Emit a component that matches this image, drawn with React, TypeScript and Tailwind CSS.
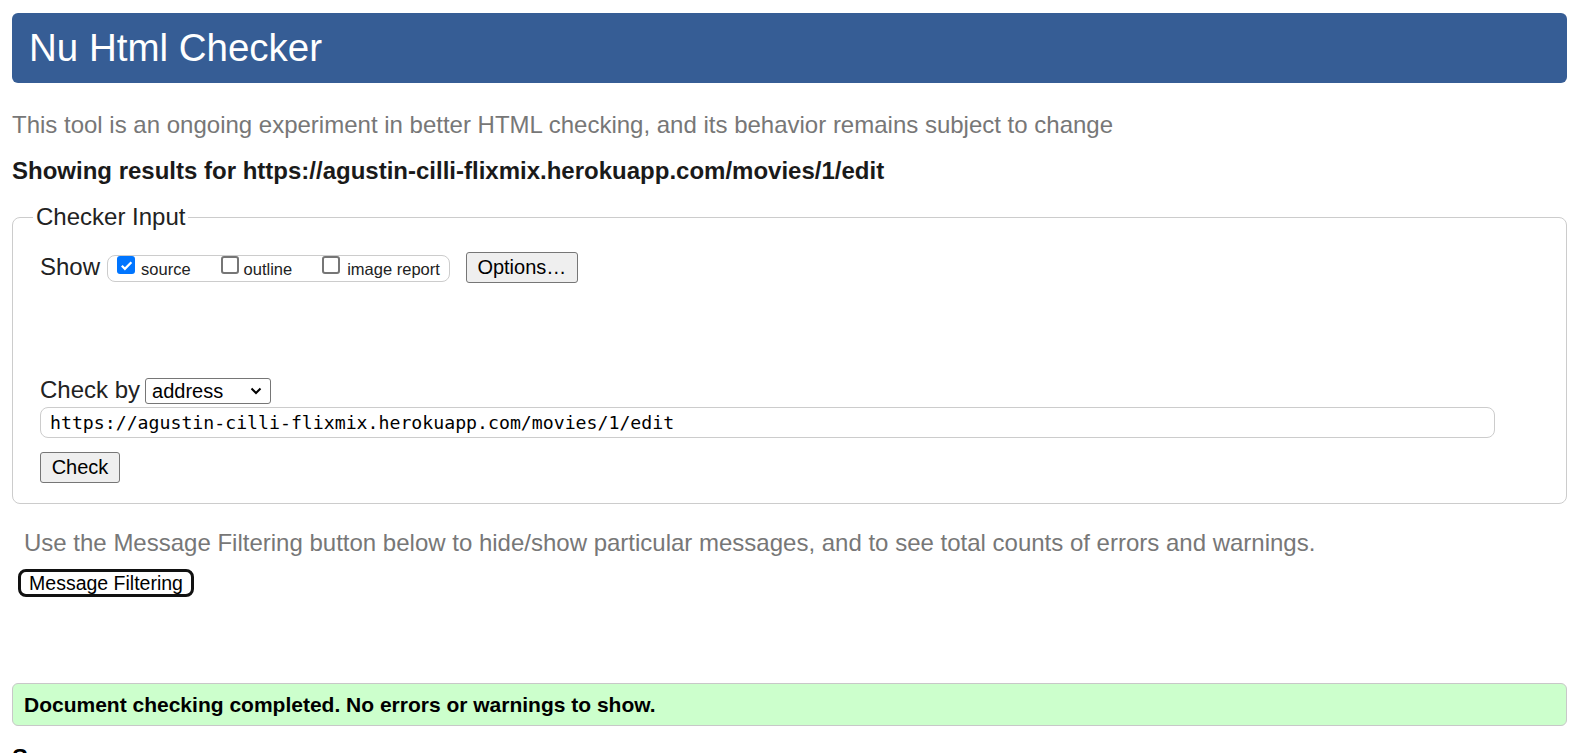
import React from "react";

function Checkbox({ checked }: { checked?: boolean }) {
  if (checked) {
    return (
      <span className="flex h-[18px] w-[18px] shrink-0 items-center justify-center rounded-[3px] bg-[#0075ff]">
        <svg viewBox="0 0 16 16" className="h-[15px] w-[15px]">
          <path d="M3 8.3l3.3 3.3L13.2 4.6" fill="none" stroke="white" strokeWidth="2.4" />
        </svg>
      </span>
    );
  }
  return <span className="h-[18px] w-[18px] shrink-0 rounded-[3px] border-2 border-[#767676] bg-white" />;
}

function ShowOption({ label, checked, gap, first }: { label: string; checked?: boolean; gap: string; first?: boolean }) {
  return (
    <div className={`flex items-start ${first ? "" : "ml-[30px]"}`}>
      <Checkbox checked={checked} />
      <span className={`${gap} mt-[3px] text-[16.5px] leading-[20px] text-[#222]`}>{label}</span>
    </div>
  );
}

const grayButton =
  "flex items-center justify-center rounded-[3px] border border-[#767676] bg-[#efefef] text-[20px] leading-[23px] text-black";

export default function App() {
  return (
    <div className="min-h-screen bg-white pl-[12px] pr-[22px] font-['Liberation_Sans',Arial,sans-serif] text-[#222]">
      <header className="mt-[13px] flex h-[70px] items-center rounded-[6px] bg-[#365d95] pl-[17px]">
        <h1 className="text-[38.5px] leading-[46px] text-white">Nu Html Checker</h1>
      </header>

      <p className="mt-[28px] text-[24px] leading-[28px] text-[#777]">
        This tool is an ongoing experiment in better HTML checking, and its behavior remains subject to change
      </p>

      <p className="mt-[18px] text-[24px] font-bold leading-[28px] text-[#1a1a1a]">
        Showing results for https://agustin-cilli-flixmix.herokuapp.com/movies/1/edit
      </p>

      <fieldset className="mt-[18px] rounded-[8px] border border-[#cccccc] pb-[20px] pl-[20px]">
        <legend className="px-[3px] text-[24px] leading-[28px]">Checker Input</legend>

        <div className="pl-[7px]">
          <div className="mt-[21px] flex items-start">
            <span className="mt-[1px] text-[24px] leading-[28px]">Show</span>
            <div className="ml-[7px] mt-[3px] flex h-[27px] items-start rounded-[8px] border border-[#cccccc] pl-[9px] pr-[9px]">
              <ShowOption label="source" checked gap="ml-[6px]" first />
              <ShowOption label="outline" gap="ml-[5px]" />
              <ShowOption label="image report" gap="ml-[7px]" />
            </div>
            <button className={`${grayButton} ml-[16px] h-[31px] w-[112px]`}>Options…</button>
          </div>

          <div className="mt-[93px] flex items-start">
            <span className="text-[24px] leading-[28px]">Check by</span>
            <div className="ml-[5px] mt-[2px] flex h-[26px] w-[126px] items-center justify-between rounded-[3px] border border-[#767676] bg-white pl-[6px] pr-[8px]">
              <span className="text-[20px] leading-[23px] text-black">address</span>
              <svg viewBox="0 0 12 8" className="h-[8px] w-[12px]">
                <path d="M1.5 1.5L6 6l4.5-4.5" fill="none" stroke="black" strokeWidth="2" />
              </svg>
            </div>
          </div>

          <div className="mr-[71px] mt-[3px] flex h-[31px] items-center rounded-[8px] border border-[#cccccc] pl-[9px]">
            <span className="font-['DejaVu_Sans_Mono',monospace] text-[18.2px] leading-[22px] text-black">
              https://agustin-cilli-flixmix.herokuapp.com/movies/1/edit
            </span>
          </div>

          <button className={`${grayButton} mt-[14px] h-[31px] w-[80px]`}>Check</button>
        </div>
      </fieldset>

      <p className="mt-[25px] pl-[12px] text-[24px] leading-[28px] text-[#777]">
        Use the Message Filtering button below to hide/show particular messages, and to see total counts of errors and
        warnings.
      </p>

      <button className="ml-[6px] mt-[12px] flex h-[28px] w-[176px] items-center justify-center rounded-[8px] border-[3px] border-[#111] bg-white text-[19.5px] leading-[22px] text-black">
        Message Filtering
      </button>

      <div className="mt-[86px] flex h-[43px] items-center rounded-[6px] border border-[#c8c8c8] bg-[#ccffcc] pl-[11px]">
        <span className="text-[21px] font-bold leading-[24px] text-black">
          Document checking completed. No errors or warnings to show.
        </span>
      </div>

      <h2 className="mt-[18px] text-[24px] font-bold leading-[28px] text-black">Source</h2>
      <div className="h-[200px]" />
    </div>
  );
}
